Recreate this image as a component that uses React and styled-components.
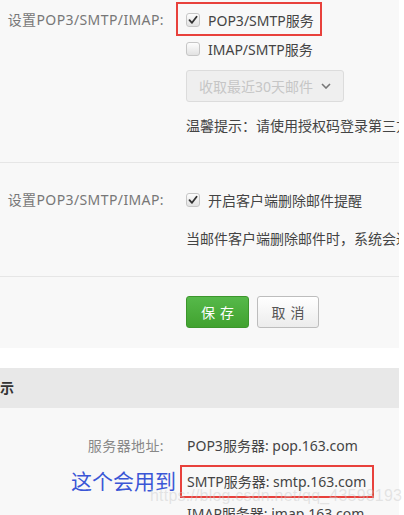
import React from "react";
import styled, { createGlobalStyle } from "styled-components";

const Global = createGlobalStyle`
  html, body { margin: 0; padding: 0; background: #fff; }
  body {
    font-family: "Noto Sans", "Noto Sans CJK SC", sans-serif;
    font-size: 14px;
    color: #444;
    overflow: hidden;
  }
`;

const Page = styled.div`
  width: 399px;
  position: relative;
`;

const Panel = styled.div`
  background: #f8f8f8;
`;

const Section = styled.div`
  display: grid;
  grid-template-columns: 164px 1fr;
  column-gap: 22px;
  padding: ${(p) => p.$pad};
  border-top: ${(p) => (p.$divider ? "1px solid #e6e6e6" : "none")};
  white-space: nowrap;
  overflow: hidden;
`;

const Label = styled.div`
  text-align: right;
  color: #777;
  letter-spacing: 0.4px;
  height: ${(p) => p.$h || 29}px;
  line-height: ${(p) => p.$h || 29}px;
`;

const Content = styled.div`
  display: flex;
  flex-direction: column;
  align-items: flex-start;
`;

const OptionRow = styled.label`
  display: flex;
  align-items: center;
  gap: 8px;
  height: 29px;
  color: #444;
`;

const Annotated = styled.div`
  border: 2px solid #e8413c;
  margin: ${(p) => p.$m};
  padding: ${(p) => p.$p};
  display: flex;
  justify-self: start;
`;

const Box = styled.span`
  width: 12px;
  height: 12px;
  border: 1px solid #c6c6c6;
  border-radius: 3px;
  background: linear-gradient(#fdfdfd, #e2e2e2);
  display: inline-flex;
  align-items: center;
  justify-content: center;
  box-sizing: content-box;
`;

const Checkbox = ({ checked }) => (
  <Box>
    {checked && (
      <svg width="10" height="10" viewBox="0 0 10 10">
        <path d="M1.5 5.2 L4 7.8 L8.6 1.8" fill="none" stroke="#333" strokeWidth="1.8" strokeLinecap="round" strokeLinejoin="round" />
      </svg>
    )}
  </Box>
);

const Select = styled.div`
  margin-top: 7px;
  height: 30px;
  width: 144px;
  box-sizing: content-box;
  border: 1px solid #dcdcdc;
  border-radius: 3px;
  background: #efefef;
  color: #c6c6c6;
  display: flex;
  align-items: center;
  justify-content: space-between;
  padding: 0 0 0 12px;
`;

const Chevron = styled.svg`
  margin-right: 12px;
`;

const Hint = styled.div`
  margin-top: ${(p) => p.$mt}px;
  height: 20px;
  line-height: 20px;
  color: #444;
`;

const Buttons = styled.div`
  display: flex;
  gap: 8px;
`;

const Button = styled.button`
  height: 32px;
  width: ${(p) => p.$w}px;
  border-radius: 3px;
  font-family: inherit;
  font-size: 14px;
  letter-spacing: 5px;
  text-indent: 5px;
  cursor: pointer;
  padding: 0;
  ${(p) =>
    p.$primary
      ? `background: linear-gradient(#56b94a, #41a22f); border: 1px solid #3c962c; color: #fff;`
      : `background: linear-gradient(#ffffff, #ececec); border: 1px solid #bdbdbd; color: #555;`}
`;

const Gap = styled.div`
  height: 20px;
  background: #fff;
`;

const Header = styled.div`
  height: 40px;
  line-height: 40px;
  background: #e8e8e8;
  font-weight: bold;
  color: #333;
  font-size: 14px;
`;

const InfoSection = styled.div`
  display: grid;
  grid-template-columns: 164px 1fr;
  column-gap: 23px;
  row-gap: 7px;
  padding: 23px 0 20px 0;
  white-space: nowrap;
`;

const InfoLabel = styled.div`
  text-align: right;
  color: #888;
  letter-spacing: 0.4px;
  height: 29px;
  line-height: 29px;
`;

const Note = styled.div`
  text-align: right;
  color: #3a56d6;
  font-size: 21px;
  height: 29px;
  line-height: 29px;
  margin-right: -12px;
`;

const InfoText = styled.div`
  height: 29px;
  line-height: 29px;
  color: #444;
  margin-top: ${(p) => p.$mt || 0}px;
`;

const Watermark = styled.div`
  position: absolute;
  left: 150px;
  top: 487px;
  font-family: "Liberation Sans", sans-serif;
  font-size: 16px;
  color: rgba(200, 200, 200, 0.45);
  pointer-events: none;
  letter-spacing: 0.2px;
`;

export default function App() {
  return (
    <Page>
      <Global />
      <Panel>
        <Section $pad="5px 0 26px 0">
          <Label>设置POP3/SMTP/IMAP:</Label>
          <Content>
            <Annotated $m="-3px 0 -2px -10px" $p="1px 6px 0 8px">
              <OptionRow>
                <Checkbox checked />
                POP3/SMTP服务
              </OptionRow>
            </Annotated>
            <OptionRow>
              <Checkbox />
              IMAP/SMTP服务
            </OptionRow>
            <Select>
              收取最近30天邮件
              <Chevron width="10" height="6" viewBox="0 0 10 6">
                <path d="M1 1 L5 5 L9 1" fill="none" stroke="#777" strokeWidth="1.6" />
              </Chevron>
            </Select>
            <Hint $mt={14}>温馨提示：请使用授权码登录第三方邮件客户端</Hint>
          </Content>
        </Section>
        <Section $divider $pad="22px 0 27px 0">
          <Label>设置POP3/SMTP/IMAP:</Label>
          <Content>
            <OptionRow>
              <Checkbox checked />
              开启客户端删除邮件提醒
            </OptionRow>
            <Hint $mt={15}>当邮件客户端删除邮件时，系统会进行提醒</Hint>
          </Content>
        </Section>
        <Section $divider $pad="19px 0 20px 0">
          <div />
          <Buttons>
            <Button $primary $w={63}>保存</Button>
            <Button $w={62}>取消</Button>
          </Buttons>
        </Section>
      </Panel>
      <Gap />
      <Header>示</Header>
      <Panel>
        <InfoSection>
          <InfoLabel>服务器地址:</InfoLabel>
          <InfoText>POP3服务器: pop.163.com</InfoText>
          <Note>这个会用到</Note>
          <Annotated $m="-2px 0 -2px -7px" $p="0 6px 0 5px">
            <InfoText>SMTP服务器: smtp.163.com</InfoText>
          </Annotated>
          <div />
          <InfoText $mt={-4}>IMAP服务器: imap.163.com</InfoText>
        </InfoSection>
      </Panel>
      <Watermark>https://blog.csdn.net/qq_43598193</Watermark>
    </Page>
  );
}
